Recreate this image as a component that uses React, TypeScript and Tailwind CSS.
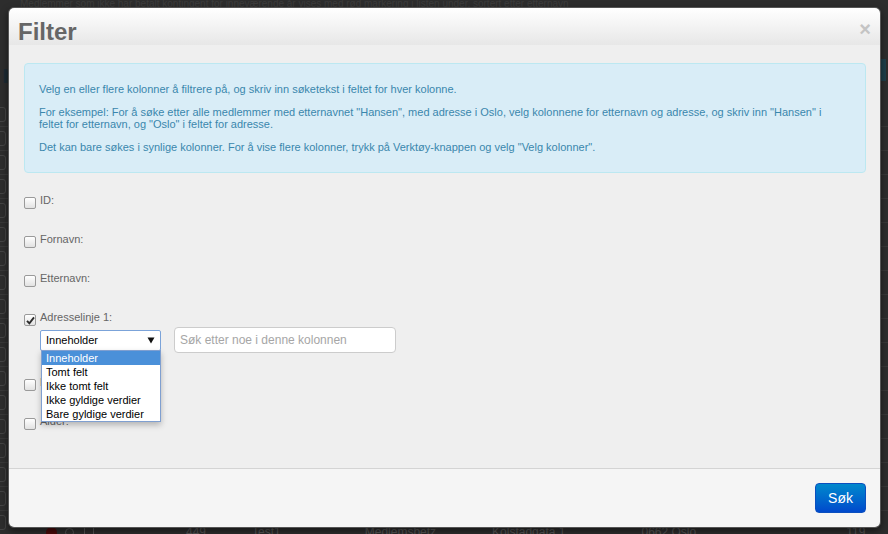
const font = { fontFamily: '"Liberation Sans", Arial, sans-serif' }

type Field = { label: string; checked?: boolean }

const fields: Field[] = [
  { label: 'ID:' },
  { label: 'Fornavn:' },
  { label: 'Etternavn:' },
  { label: 'Adresselinje 1:', checked: true },
  { label: 'Postnummer:' },
  { label: 'Alder:' },
]

const options = ['Inneholder', 'Tomt felt', 'Ikke tomt felt', 'Ikke gyldige verdier', 'Bare gyldige verdier']

/* ── Dimmed page behind the dialog ── */
function BackdropPage() {
  const rows = Array.from({ length: 19 })
  return (
    <div className="absolute inset-0 bg-[#2d2d2d]">
      <div className="h-[9px] px-[20px] text-[10px] leading-[8px] text-[#3c3c3c] whitespace-nowrap overflow-hidden">
        Medlemmer som ikke har betalt kontingent for inneværende år vises med rød markering i listen under, sortert etter etternavn
      </div>
      <div className="mt-[50px] flex justify-between px-[2px]">
        <span className="text-[26px] font-bold leading-[30px] text-[#1c2a33]">r</span>
        <span className="w-[10px] h-[22px] bg-[#1f3f4a] rounded-l-[3px]" />
      </div>
      <div className="mt-[14px]">
        {rows.map((_, i) => (
          <div key={i} className="h-[24px] border-b border-[#383838] flex items-center">
            <span className="ml-[-6px] w-[12px] h-[15px] border border-[#444] rounded-[3px]" />
          </div>
        ))}
      </div>
      <div className="absolute left-0 right-0 top-[524px] h-[16px] flex items-center text-[12px] text-[#555]">
        <span className="ml-[46px] w-[11px] h-[11px] rounded-full bg-[#4a0a0a]" />
        <span className="ml-[8px] w-[9px] h-[9px] rounded-full border border-[#555]" />
        <span className="ml-[10px] w-[10px] h-[10px] border border-[#555]" />
        <span className="ml-[92px]">449</span>
        <span className="ml-[46px]">Test1</span>
        <span className="ml-[84px]">Medlemsbetz</span>
        <span className="ml-[56px]">Kolstadgata 1</span>
        <span className="ml-[76px]">0662 Oslo</span>
        <span className="ml-[150px]">119</span>
      </div>
    </div>
  )
}

function Checkbox({ checked }: { checked?: boolean }) {
  return (
    <span className="mt-[3px] w-[12px] h-[12px] shrink-0 rounded-[2px] border border-[#9a9a9a] bg-gradient-to-b from-[#ffffff] to-[#e2e2e2] flex items-center justify-center">
      {checked && (
        <svg width="9" height="9" viewBox="0 0 9 9">
          <path d="M1 4.8 L3.4 7.4 L8 1.4" fill="none" stroke="#2b2b2b" strokeWidth="1.9" />
        </svg>
      )}
    </span>
  )
}

function SelectWithList() {
  return (
    <div className="relative">
      <div className="w-[121px] h-[21px] rounded-[2px] border border-[#7ba3d9] bg-white flex items-center justify-between pl-[5px] pr-[5px] text-[11px] text-black">
        <span>Inneholder</span>
        <svg width="8" height="7" viewBox="0 0 8 7">
          <path d="M0.5 0.5 L7.5 0.5 L4 6.5 Z" fill="#111" />
        </svg>
      </div>
      {/* open option list */}
      <div className="absolute left-[1px] top-[20px] w-[120px] border border-[#7f9fd0] bg-white shadow-[0_3px_6px_rgba(0,0,0,0.25)] z-10">
        {options.map((o, i) => (
          <div
            key={o}
            className={
              i === 0
                ? 'h-[14px] leading-[14px] pl-[4px] text-[11px] bg-[#4a90d9] text-white'
                : 'h-[14px] leading-[14px] pl-[4px] text-[11px] text-black'
            }
          >
            {o}
          </div>
        ))}
      </div>
    </div>
  )
}

export default function App() {
  return (
    <div className="relative w-[888px] h-[534px] overflow-hidden" style={font}>
      <BackdropPage />

      {/* ── Dialog ── */}
      <div className="absolute inset-0 pl-[8px] pt-[7px]">
        <div className="w-[873px] h-[521px] rounded-[6px] overflow-hidden border border-[#555] shadow-[0_3px_7px_rgba(0,0,0,0.5)] flex flex-col">
          {/* Header */}
          <div className="h-[37px] shrink-0 bg-gradient-to-b from-[#ffffff] to-[#e7e7e7] flex items-center justify-between pl-[9px] pr-[9px]">
            <h3 className="text-[24px] font-bold text-[#666] leading-none mt-[11px]">Filter</h3>
            <span className="text-[20px] font-bold text-[#c4c4c4] leading-none mt-[5px]">×</span>
          </div>

          {/* Body */}
          <div className="flex-1 bg-[#efefef] pt-[18px] pl-[15px] pr-[14px]">
            <div className="rounded-[4px] border border-[#bce8f1] bg-[#d9edf7] pl-[14px] pr-[35px] pt-[19px] pb-[8px] text-[11px] leading-[12px] text-[#3a87ad]">
              <p className="mb-[11px]">Velg en eller flere kolonner å filtrere på, og skriv inn søketekst i feltet for hver kolonne.</p>
              <p className="mb-[11px]">
                For eksempel: For å søke etter alle medlemmer med etternavnet "Hansen", med adresse i Oslo, velg kolonnene for etternavn og adresse, og skriv inn "Hansen" i feltet for etternavn, og "Oslo" i feltet for adresse.
              </p>
              <p className="mb-[11px]">Det kan bare søkes i synlige kolonner. For å vise flere kolonner, trykk på Verktøy-knappen og velg "Velg kolonner".</p>
            </div>

            <div className="mt-[21px] flex flex-col">
              {fields.map((f) => (
                <div key={f.label} className="flex gap-[4px] mb-[24px]">
                  <Checkbox checked={f.checked} />
                  <div className="flex flex-col">
                    <span className="text-[11px] leading-[13px] text-[#666]">{f.label}</span>
                    {f.checked && (
                      <div className="mt-[3px] -mb-[1px] flex items-center gap-[13px]">
                        <SelectWithList />
                        <input
                          className="w-[222px] h-[26px] rounded-[4px] border border-[#cccccc] bg-white px-[5px] text-[12px] text-[#333] placeholder:text-[#a6a6a6] outline-none"
                          placeholder="Søk etter noe i denne kolonnen"
                          style={font}
                        />
                      </div>
                    )}
                  </div>
                </div>
              ))}
            </div>
          </div>

          {/* Footer */}
          <div className="h-[59px] shrink-0 border-t border-[#d4d4d4] bg-[#f5f5f5] flex justify-end items-start pt-[14px] pr-[14px]">
            <button className="w-[51px] h-[30px] rounded-[4px] border border-[#0a4fbf] bg-gradient-to-b from-[#0088cc] to-[#0048cc] text-[14px] text-white">
              Søk
            </button>
          </div>
        </div>
      </div>
    </div>
  )
}
